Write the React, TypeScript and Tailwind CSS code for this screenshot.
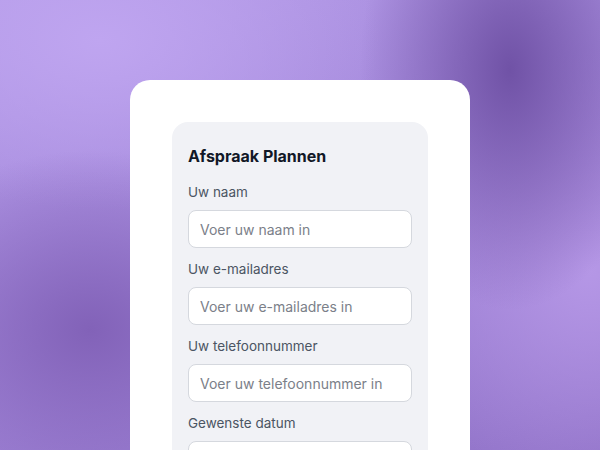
import React from "react";

const velden = [
  { label: "Uw naam", placeholder: "Voer uw naam in", type: "text" },
  { label: "Uw e-mailadres", placeholder: "Voer uw e-mailadres in", type: "email" },
  { label: "Uw telefoonnummer", placeholder: "Voer uw telefoonnummer in", type: "tel" },
  { label: "Gewenste datum", placeholder: "", type: "text" },
];

export default function App() {
  return (
    <div className="min-h-screen w-full font-['Inter',sans-serif] bg-[radial-gradient(ellipse_150px_240px_at_510px_70px,#7052a6_0%,transparent_100%),radial-gradient(ellipse_200px_220px_at_590px_270px,#b597e6_0%,transparent_100%),radial-gradient(ellipse_220px_180px_at_90px_330px,#8262b8_0%,transparent_100%),radial-gradient(ellipse_280px_170px_at_100px_40px,#bfa5f0_0%,transparent_100%),linear-gradient(160deg,#b49be8_0%,#a387da_45%,#8d6ec4_100%)] flex justify-center pt-[80px]">
      <div className="w-[340px] bg-white rounded-[20px] p-[42px] pb-10">
        <div className="bg-[#f1f2f6] rounded-2xl px-4 pt-[22px] pb-6">
          <h1 className="text-[16px] leading-6 font-bold text-[#111827]">Afspraak Plannen</h1>
          <div className="mt-[14px] flex flex-col gap-[11px]">
            {velden.map((veld, index) => (
              <div key={index} className="flex flex-col">
                <label className="text-[13.5px] leading-5 text-[#4b5563] mb-2">{veld.label}</label>
                <input
                  type={veld.type}
                  placeholder={veld.placeholder}
                  className="w-full h-[38px] rounded-lg border border-[#d5d8de] bg-white px-[11px] text-[14px] text-[#111827] placeholder:text-[#7b8089] outline-none"
                />
              </div>
            ))}
          </div>
        </div>
      </div>
    </div>
  );
}
